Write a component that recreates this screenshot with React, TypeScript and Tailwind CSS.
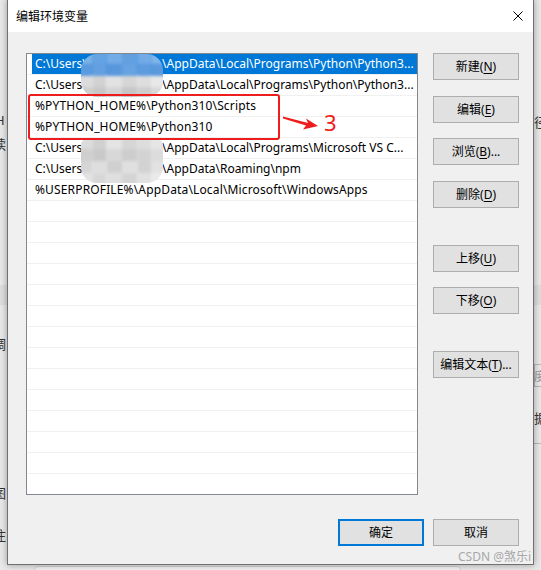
import React from "react";

const F = "font-['Noto_Sans','Noto_Sans_CJK_SC',sans-serif]";

type Row = { a: string; b?: string; sel?: boolean };

const rows: Row[] = [
  { a: "C:\\Users\\", b: "\\AppData\\Local\\Programs\\Python\\Python3...", sel: true },
  { a: "C:\\Users\\", b: "\\AppData\\Local\\Programs\\Python\\Python3..." },
  { a: "%PYTHON_HOME%\\Python310\\Scripts" },
  { a: "%PYTHON_HOME%\\Python310" },
  { a: "C:\\Users\\", b: "\\AppData\\Local\\Programs\\Microsoft VS C..." },
  { a: "C:\\Users\\", b: "\\AppData\\Roaming\\npm" },
  { a: "%USERPROFILE%\\AppData\\Local\\Microsoft\\WindowsApps" },
];

function Btn({ label, k, tail, primary }: { label: string; k?: string; tail?: string; primary?: boolean }) {
  return (
    <div
      className={`w-[86px] h-[27px] flex items-center justify-center bg-[#e1e1e1] text-[12px] text-black ${F} ${
        primary ? "border-2 border-[#0078d7]" : "border border-[#adadad]"
      }`}
    >
      <span>
        {label}
        {k ? (
          <>
            (<span className="underline underline-offset-2">{k}</span>)
          </>
        ) : null}
        {tail}
      </span>
    </div>
  );
}

function Mosaic({ colors, cls }: { colors: string[]; cls: string }) {
  return (
    <div className={`absolute overflow-hidden ${cls}`}>
      <div className="grid grid-cols-6 w-full h-full blur-[1.5px] scale-110">
        {colors.map((c, i) => (
          <div key={i} style={{ background: c }} />
        ))}
      </div>
    </div>
  );
}

const blob1 = [
  "#7cb2e7", "#66a3e2", "#73ace6", "#62a0e0", "#72abe5", "#80b5e9",
  "#5a9ade", "#64a0e1", "#5897dc", "#67a2e1", "#5e9cdf", "#5b99dd",
  "#dcdcdc", "#d2d2d2", "#e2e2e2", "#d6d6d6", "#dedede", "#e8e8e8",
  "#cfcfcf", "#c8c8c8", "#d4d4d4", "#c6c6c6", "#cdcdcd", "#d9d9d9",
];
const blob2 = [
  "#dcdcdc", "#d0d0d0", "#e4e4e4", "#d6d6d6", "#dddddd", "#e6e6e6",
  "#cfcfcf", "#c9c9c9", "#d8d8d8", "#cdcdcd", "#d3d3d3", "#dcdcdc",
  "#d5d5d5", "#dedede", "#d0d0d0", "#e0e0e0", "#d2d2d2", "#e2e2e2",
  "#e3e3e3", "#d7d7d7", "#dfdfdf", "#d4d4d4", "#e1e1e1", "#eaeaea",
];

export default function App() {
  const total = 21;
  return (
    <div className={`relative w-[541px] h-[570px] overflow-hidden bg-[#e9e9e9] pl-[7px] ${F}`}>
      {/* desktop fragments behind the dialog */}
      <div className="absolute left-0 top-[285px] w-full h-[20px] bg-[#dedede]" />
      <div className="absolute left-[-5px] top-[114px] text-[13px] leading-none text-[#333]">H</div>
      <div className="absolute left-[-7px] top-[137px] text-[13px] leading-none text-[#333] font-['Noto_Sans_CJK_SC']">读</div>
      <div className="absolute left-[-7px] top-[337px] text-[13px] leading-none text-[#333] font-['Noto_Sans_CJK_SC']">调</div>
      <div className="absolute left-[-7px] top-[486px] text-[13px] leading-none text-[#333] font-['Noto_Sans_CJK_SC']">图</div>
      <div className="absolute left-[-7px] top-[528px] text-[13px] leading-none text-[#333] font-['Noto_Sans_CJK_SC']">注</div>
      <div className="absolute left-[534px] top-[115px] text-[13px] leading-none text-[#333] font-['Noto_Sans_CJK_SC']">径</div>
      <div className="absolute left-[534px] top-[364px] w-[20px] h-[23px] border border-[#b8b8b8]" />
      <div className="absolute left-[534px] top-[370px] text-[12px] leading-none text-[#999] font-['Noto_Sans_CJK_SC']">度</div>
      <div className="absolute left-[534px] top-[411px] text-[13px] leading-none text-[#333] font-['Noto_Sans_CJK_SC']">据</div>
      <div className="absolute left-[534px] top-[443px] w-[20px] h-px bg-[#b8b8b8]" />
      <div className="absolute left-[34px] top-[566px] w-[427px] h-[20px] rounded-[4px] border border-[#d4d4d4] bg-[#f3f3f3]" />

      {/* dialog */}
      <div className="relative -mt-px w-[527px] h-[566px] border border-[#707070] bg-[#f0f0f0] shadow-[0_0_7px_rgba(0,0,0,0.35)] flex flex-col">
        <div className="h-[32px] bg-white flex items-center justify-between pl-[8px] pr-[10px] shrink-0">
          <span className="text-[12px] text-black font-['Noto_Sans_CJK_SC']">编辑环境变量</span>
          <svg width="10" height="10" viewBox="0 0 10 10">
            <path d="M0.5 0.5 L9.5 9.5 M9.5 0.5 L0.5 9.5" stroke="#000" strokeWidth="1" />
          </svg>
        </div>
        <div className="flex-1 flex flex-col pl-[18px] pr-[14px] pt-[21px] pb-[18px]">
          <div className="flex gap-[15px]">
            <div className="relative w-[392px] h-[442px] border border-[#828790] bg-white overflow-hidden">
              {Array.from({ length: total }).map((_, i) => {
                const r = rows[i];
                return (
                  <div key={i} className="h-[21px] border-b border-[#f0f0f0] flex">
                    {r ? (
                      <div
                        className={`ml-[5px] flex-1 flex items-center pl-[3px] text-[12px] whitespace-nowrap overflow-hidden ${
                          r.sel ? "bg-[#0078d7] text-white" : "text-black"
                        }`}
                      >
                        {r.b ? (
                          <>
                            <span className="inline-block w-[127px] shrink-0">{r.a}</span>
                            <span>{r.b}</span>
                          </>
                        ) : (
                          <span className="tracking-[0.15px]">{r.a}</span>
                        )}
                      </div>
                    ) : null}
                  </div>
                );
              })}

              {/* blurred username overlays */}
              <Mosaic colors={blob1} cls="left-[54px] top-0 w-[82px] h-[43px] rounded-[16px]" />
              <Mosaic colors={blob2} cls="left-[54px] top-[85px] w-[82px] h-[44px] rounded-b-[16px] rounded-t-[6px]" />

              {/* red annotation */}
              <div className="absolute left-[1px] top-[40px] w-[252px] h-[46px] border-[2.5px] border-[#ee1d1d] rounded-[3px]" />
              <svg className="absolute left-[256px] top-[61px]" width="40" height="18" viewBox="0 0 40 18">
                <path d="M0 1.5 L25 8 L23 3.5 L35 11 L20 14.5 L23 10.5 L0 3.5 Z" fill="#ee1d1d" />
              </svg>
              <div className="absolute left-[297px] top-[57px] text-[22px] leading-none text-[#ee1d1d] font-['Noto_Sans']">3</div>
            </div>

            <div className="flex flex-col">
              <Btn label="新建" k="N" />
              <div className="mt-[16px]"><Btn label="编辑" k="E" /></div>
              <div className="mt-[15px]"><Btn label="浏览" k="B" tail="..." /></div>
              <div className="mt-[16px]"><Btn label="删除" k="D" /></div>
              <div className="mt-[37px]"><Btn label="上移" k="U" /></div>
              <div className="mt-[15px]"><Btn label="下移" k="O" /></div>
              <div className="mt-[37px]"><Btn label="编辑文本" k="T" tail="..." /></div>
            </div>
          </div>
          <div className="mt-[24px] flex justify-end gap-[9px]">
            <Btn label="确定" primary />
            <Btn label="取消" />
          </div>
        </div>
      </div>

      <div className="absolute left-[458px] top-[548px] text-[12px] text-[#a8a8a8] whitespace-nowrap">CSDN @煞乐i</div>
    </div>
  );
}
